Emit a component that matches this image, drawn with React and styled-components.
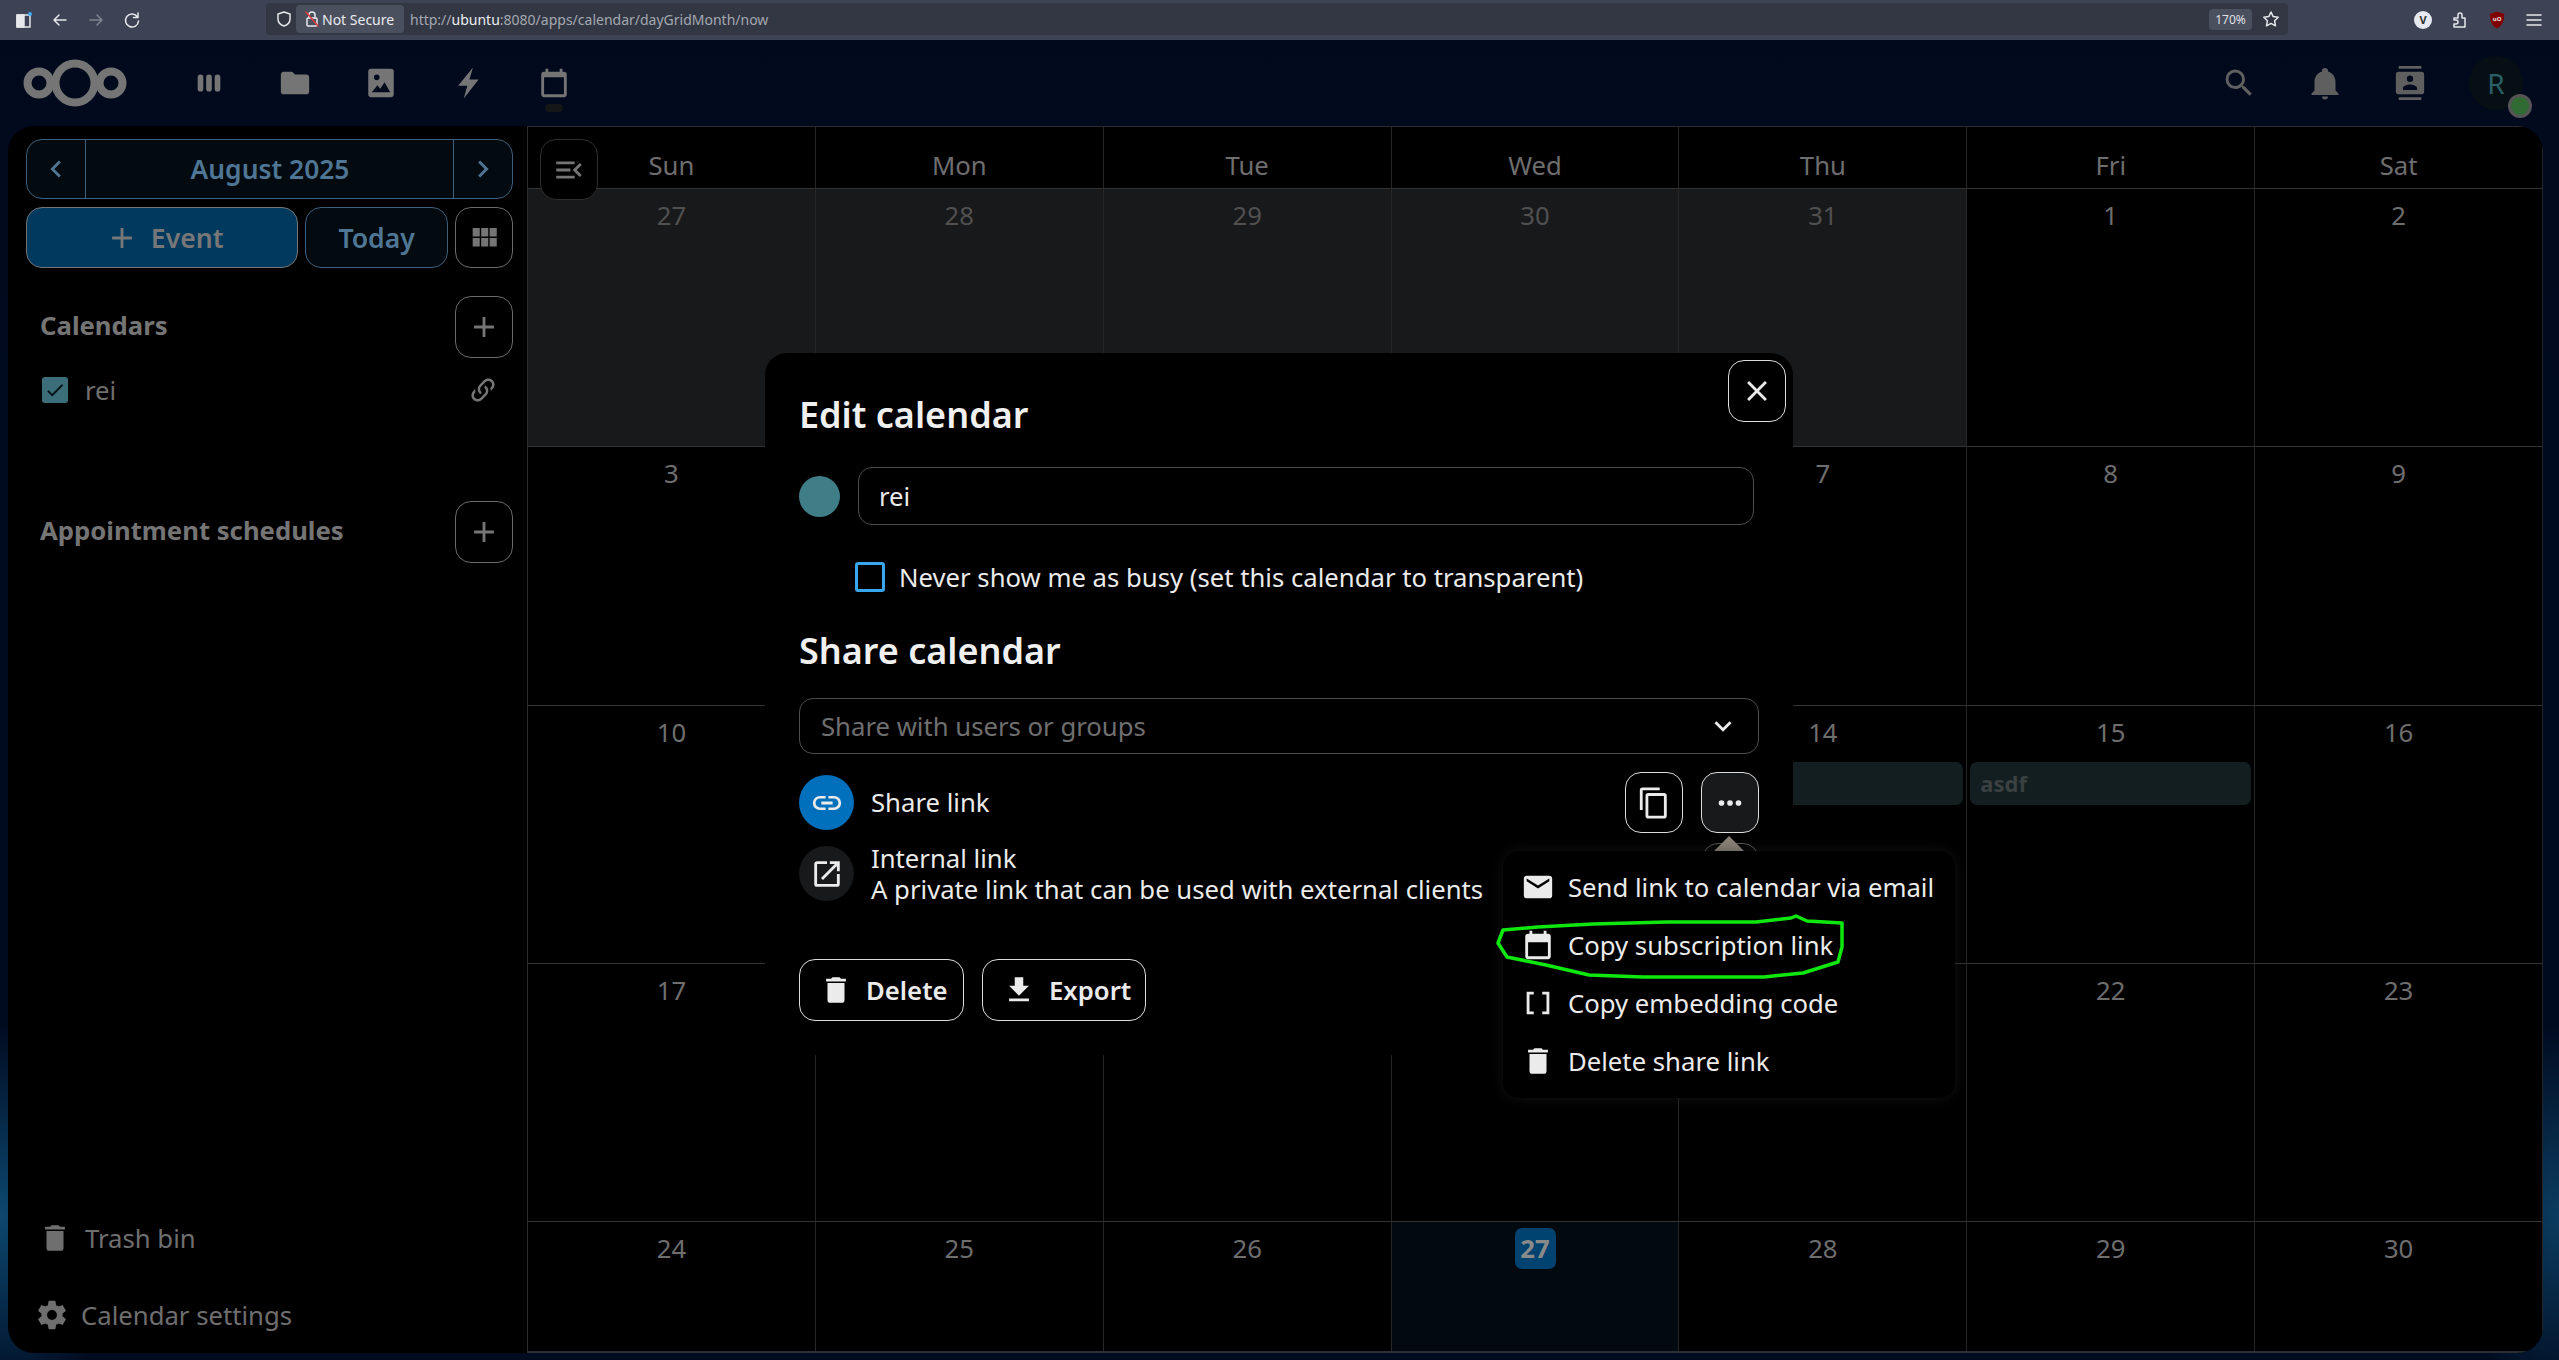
import React from "react";
import styled, { createGlobalStyle } from "styled-components";

const P = {
  del: "M19,4H15.5L14.5,3H9.5L8.5,4H5V6H19M6,19A2,2 0 0,0 8,21H16A2,2 0 0,0 18,19V7H6V19Z",
  download: "M5,20H19V18H5M19,9H15V3H9V9H5L12,16L19,9Z",
  close: "M19,6.41L17.59,5L12,10.59L6.41,5L5,6.41L10.59,12L5,17.59L6.41,19L12,13.41L17.59,19L19,17.59L13.41,12L19,6.41Z",
  plus: "M19,13H13V19H11V13H5V11H11V5H13V11H19V13Z",
  email: "M20,8L12,13L4,8V6L12,11L20,6M20,4H4C2.89,4 2,4.89 2,6V18A2,2 0 0,0 4,20H20A2,2 0 0,0 22,18V6C22,4.89 21.1,4 20,4Z",
  calBlank: "M19 4H18V2H16V4H8V2H6V4H5A2 2 0 0 0 3 6V20A2 2 0 0 0 5 22H19A2 2 0 0 0 21 20V6A2 2 0 0 0 19 4M19 20H5V10H19V20Z",
  brackets: "M15,4V6H18V18H15V20H20V4M4,4V20H9V18H6V6H9V4H4Z",
  cog: "M12,15.5A3.5,3.5 0 0,1 8.5,12A3.5,3.5 0 0,1 12,8.5A3.5,3.5 0 0,1 15.5,12A3.5,3.5 0 0,1 12,15.5M19.43,12.97C19.47,12.65 19.5,12.33 19.5,12C19.5,11.67 19.47,11.34 19.43,11L21.54,9.37C21.73,9.22 21.78,8.95 21.66,8.73L19.66,5.27C19.54,5.05 19.27,4.96 19.05,5.05L16.56,6.05C16.04,5.66 15.5,5.32 14.87,5.07L14.5,2.42C14.46,2.18 14.25,2 14,2H10C9.75,2 9.54,2.18 9.5,2.42L9.13,5.07C8.5,5.32 7.96,5.66 7.44,6.05L4.95,5.05C4.73,4.96 4.46,5.05 4.34,5.27L2.34,8.73C2.21,8.95 2.27,9.22 2.46,9.37L4.57,11C4.53,11.34 4.5,11.67 4.5,12C4.5,12.33 4.53,12.65 4.57,12.97L2.46,14.63C2.27,14.78 2.21,15.05 2.34,15.27L4.34,18.73C4.46,18.95 4.73,19.03 4.95,18.95L7.44,17.94C7.96,18.34 8.5,18.68 9.13,18.93L9.5,21.58C9.54,21.82 9.75,22 10,22H14C14.25,22 14.46,21.82 14.5,21.58L14.87,18.93C15.5,18.67 16.04,18.34 16.56,17.94L19.05,18.95C19.27,19.03 19.54,18.95 19.66,18.73L21.66,15.27C21.78,15.05 21.73,14.78 21.54,14.63L19.43,12.97Z",
  search: "M9.5,3A6.5,6.5 0 0,1 16,9.5C16,11.11 15.41,12.59 14.44,13.73L14.71,14H15.5L20.5,19L19,20.5L14,15.5V14.71L13.73,14.44C12.59,15.41 11.11,16 9.5,16A6.5,6.5 0 0,1 3,9.5A6.5,6.5 0 0,1 9.5,3M9.5,5C7,5 5,7 5,9.5C5,12 7,14 9.5,14C12,14 14,12 14,9.5C14,7 12,5 9.5,5Z",
  bell: "M21,19V20H3V19L5,17V11C5,7.9 7.03,5.17 10,4.29C10,4.19 10,4.1 10,4A2,2 0 0,1 12,2A2,2 0 0,1 14,4C14,4.1 14,4.19 14,4.29C16.97,5.17 19,7.9 19,11V17L21,19M14,21A2,2 0 0,1 12,23A2,2 0 0,1 10,21",
  contacts: "M20,0H4V2H20V0M4,24H20V22H4V24M20,4H4A2,2 0 0,0 2,6V18A2,2 0 0,0 4,20H20A2,2 0 0,0 22,18V6A2,2 0 0,0 20,4M12,6.75A2.25,2.25 0 0,1 14.25,9A2.25,2.25 0 0,1 12,11.25A2.25,2.25 0 0,1 9.75,9A2.25,2.25 0 0,1 12,6.75M17,17H7V15.5C7,13.83 10.33,13 12,13C13.67,13 17,13.83 17,15.5V17Z",
  folder: "M10,4H4C2.89,4 2,4.89 2,6V18A2,2 0 0,0 4,20H20A2,2 0 0,0 22,18V8C22,6.89 21.1,6 20,6H12L10,4Z",
  grid: "M16,5V11H21V5M10,11H15V5H10M16,18H21V12H16M10,18H15V12H10M4,11H9V5H4M4,18H9V12H4V18Z",
  copy: "M19,21H8V7H19M19,5H8A2,2 0 0,0 6,7V21A2,2 0 0,0 8,23H19A2,2 0 0,0 21,21V7A2,2 0 0,0 19,5M16,1H4A2,2 0 0,0 2,3V17H4V3H16V1Z",
  dots: "M16,12A2,2 0 0,1 18,10A2,2 0 0,1 20,12A2,2 0 0,1 18,14A2,2 0 0,1 16,12M10,12A2,2 0 0,1 12,10A2,2 0 0,1 14,12A2,2 0 0,1 12,14A2,2 0 0,1 10,12M4,12A2,2 0 0,1 6,10A2,2 0 0,1 8,12A2,2 0 0,1 6,14A2,2 0 0,1 4,12Z",
  openNew: "M14,3V5H17.59L7.76,14.83L9.17,16.24L19,6.41V10H21V3M19,19H5V5H12V3H5C3.89,3 3,3.9 3,5V19A2,2 0 0,0 5,21H19A2,2 0 0,0 21,19V12H19V19Z",
  linkVar: "M10.59,13.41C11,13.8 11,14.44 10.59,14.83C10.2,15.22 9.56,15.22 9.17,14.83C7.22,12.88 7.22,9.71 9.17,7.76V7.76L12.71,4.22C14.66,2.27 17.83,2.27 19.78,4.22C21.73,6.17 21.73,9.34 19.78,11.29L18.29,12.78C18.3,11.96 18.17,11.14 17.89,10.36L18.36,9.88C19.54,8.71 19.54,6.81 18.36,5.64C17.19,4.46 15.29,4.46 14.12,5.64L10.59,9.17C9.41,10.34 9.41,12.24 10.59,13.41M13.41,9.17C13.8,8.78 14.44,8.78 14.83,9.17C16.78,11.12 16.78,14.29 14.83,16.24V16.24L11.29,19.78C9.34,21.73 6.17,21.73 4.22,19.78C2.27,17.83 2.27,14.66 4.22,12.71L5.71,11.22C5.7,12.04 5.83,12.86 6.11,13.65L5.64,14.12C4.46,15.29 4.46,17.19 5.64,18.36C6.81,19.54 8.71,19.54 9.88,18.36L13.41,14.83C14.59,13.66 14.59,11.76 13.41,10.59C13,10.2 13,9.56 13.41,9.17Z",
  link: "M3.9,12C3.9,10.29 5.29,8.9 7,8.9H11V7H7A5,5 0 0,0 2,12A5,5 0 0,0 7,17H11V15.1H7C5.29,15.1 3.9,13.71 3.9,12M8,13H16V11H8V13M17,7H13V8.9H17C18.71,8.9 20.1,10.29 20.1,12C20.1,13.71 18.71,15.1 17,15.1H13V17H17A5,5 0 0,0 22,12A5,5 0 0,0 17,7Z",
  left: "M15.41,16.58L10.83,12L15.41,7.41L14,6L8,12L14,18L15.41,16.58Z",
  right: "M8.59,16.58L13.17,12L8.59,7.41L10,6L16,12L10,18L8.59,16.58Z",
  down: "M7.41,8.58L12,13.17L16.59,8.58L18,10L12,16L6,10L7.41,8.58Z",
  check: "M21,7L9,19L3.5,13.5L4.91,12.09L9,16.17L19.59,5.59L21,7Z",
  menuOpen: "M21,15.61L19.59,17L14.58,12L19.59,7L21,8.39L17.44,12L21,15.61M3,6H16V8H3V6M3,13V11H13V13H3M3,18V16H16V18H3Z",
  bolt: "M15.5,1L5,14H11.5L9,23L19.5,9.5H13Z",
  photo: "M5,2H19A2,2 0 0,1 21,4V20A2,2 0 0,1 19,22H5A2,2 0 0,1 3,20V4A2,2 0 0,1 5,2M9,6A2,2 0 0,0 7,8A2,2 0 0,0 9,10A2,2 0 0,0 11,8A2,2 0 0,0 9,6M5.5,18.5H18.5L14.5,11.5L11.5,16L9.5,13.5Z",
  calendarNav: "M19 4H18V2H16V4H8V2H6V4H5A2 2 0 0 0 3 6V20A2 2 0 0 0 5 22H19A2 2 0 0 0 21 20V6A2 2 0 0 0 19 4M19 20H5V8H19V20Z",
  apps: "M6,6A2,2 0 0,1 8,8V16A2,2 0 0,1 4,16V8A2,2 0 0,1 6,6M12,6A2,2 0 0,1 14,8V16A2,2 0 0,1 10,16V8A2,2 0 0,1 12,6M18,6A2,2 0 0,1 20,8V16A2,2 0 0,1 16,16V8A2,2 0 0,1 18,6Z",
};

const Global = createGlobalStyle`
  html, body { margin: 0; padding: 0; background: #000; overflow: hidden; }
  * { box-sizing: border-box; }
  body { font-family: "Noto Sans", "Liberation Sans", sans-serif; }
`;

const Svg = styled.svg`
  display: block;
  flex: none;
  width: ${(p) => p.$size || 34}px;
  height: ${(p) => p.$size || 34}px;
  fill: ${(p) => p.$color || "currentColor"};
`;
const Icon = ({ d, size, color }) => (
  <Svg viewBox="0 0 24 24" $size={size} $color={color}>
    <path d={d} />
  </Svg>
);

const Page = styled.div`
  position: relative;
  width: 2559px;
  height: 1360px;
  overflow: hidden;
  display: flex;
  flex-direction: column;
  background:
    radial-gradient(130px 190px at 0 1215px, #0c4870 0%, rgba(12, 72, 112, 0) 100%),
    radial-gradient(110px 190px at 100% 1215px, #0b3d60 0%, rgba(11, 61, 96, 0) 100%),
    linear-gradient(180deg, #010a1d 0%, #010b20 70%, #010b20 100%);
`;

/* browser chrome */
const Chrome = styled.div`
  height: 40px;
  flex: none;
  background: #3d4354;
  display: flex;
  align-items: center;
  position: relative;
  padding: 0 0 0 15px;
`;
const ChromeButtons = styled.div`
  display: flex;
  align-items: center;
  gap: 18px;
  width: 251px;
`;
const ChromeGlyph = styled.svg`
  display: block;
  flex: none;
  width: 18px;
  height: 18px;
  fill: none;
  stroke: ${(p) => p.$color || "#e6e8ec"};
  stroke-width: 1.5;
  stroke-linecap: round;
  stroke-linejoin: round;
`;
const UrlBar = styled.div`
  width: 2022px;
  height: 32px;
  background: #323743;
  border-radius: 4px;
  display: flex;
  align-items: center;
  padding: 0 8px 0 9px;
  margin-top: -2px;
`;
const NotSecure = styled.div`
  height: 28px;
  width: 108px;
  margin-left: 3px;
  border-radius: 4px;
  background: #4b505e;
  display: flex;
  align-items: center;
  gap: 1px;
  padding-left: 7px;
  color: #e8eaee;
  font-size: 14px;
  white-space: nowrap;
`;
const UrlText = styled.div`
  margin-left: 6px;
  font-size: 14px;
  color: #a3a7b0;
  flex: 1;
  white-space: nowrap;
  & b { font-weight: 400; color: #eceef1; }
`;
const ZoomChip = styled.div`
  width: 43px;
  height: 21px;
  border-radius: 4px;
  background: #4b505e;
  color: #dfe1e6;
  font-size: 12px;
  display: flex;
  align-items: center;
  justify-content: center;
  margin-right: 10px;
`;
const Extensions = styled.div`
  display: flex;
  align-items: center;
  gap: 19px;
  margin-left: 126px;
`;
const VBadge = styled.div`
  width: 18px;
  height: 18px;
  border-radius: 50%;
  background: #e6e9f2;
  color: #333;
  font-size: 11px;
  font-weight: 700;
  text-align: center;
  line-height: 18px;
`;
const ShieldLabel = styled.text`
  fill: #f3e6e6;
  stroke: none;
  font-size: 6px;
  font-weight: 700;
`;

/* nextcloud header */
const TopBar = styled.header`
  height: 86px;
  flex: none;
  display: flex;
  align-items: center;
  padding-left: 22px;
  position: relative;
`;
const Nav = styled.nav`
  display: flex;
  align-items: center;
  margin-left: 38px;
  color: #757575;
`;
const NavItem = styled.div`
  width: 86.2px;
  height: 50px;
  display: flex;
  align-items: center;
  justify-content: center;
  position: relative;
  ${(p) => p.$active && `
    &::after {
      content: "";
      position: absolute;
      left: 34px;
      bottom: -4px;
      width: 18px;
      height: 8px;
      border-radius: 4px;
      background: #141618;
    }
  `}
`;
const Spacer = styled.div`
  flex: 1;
`;
const HeaderTools = styled.div`
  display: flex;
  align-items: center;
  color: #5f5f5f;
  gap: 50px;
  padding-right: 36px;
`;
const Avatar = styled.div`
  position: relative;
  width: 54px;
  height: 54px;
  margin-left: -8px;
  border-radius: 50%;
  background: #061014;
  color: #2b5f66;
  font-size: 28px;
  line-height: 54px;
  text-align: center;
`;
const Status = styled.div`
  position: absolute;
  right: -9px;
  bottom: -8px;
  width: 24px;
  height: 24px;
  border-radius: 50%;
  background: #2f6b32;
  border: 3px solid #555;
`;

/* main */
const Body = styled.div`
  flex: 1;
  display: flex;
  margin: 0 16px 7px 8px;
  border-radius: 26px;
  overflow: hidden;
  background: #000;
  min-height: 0;
`;
const Sidebar = styled.aside`
  width: 519px;
  flex: none;
  display: flex;
  flex-direction: column;
  padding: 13px 14px 0 18px;
  color: #757575;
`;
const MonthNav = styled.div`
  height: 60px;
  display: flex;
  border: 1px solid #3d5f7a;
  border-radius: 16px;
  background: #030a10;
  color: #4f7694;
`;
const NavArrow = styled.div`
  width: 58px;
  flex: none;
  display: flex;
  align-items: center;
  justify-content: center;
`;
const MonthLabel = styled.div`
  flex: 1;
  border-left: 1px solid #3d5f7a;
  border-right: 1px solid #3d5f7a;
  font-size: 26.4px;
  font-weight: 600;
  display: flex;
  align-items: center;
  justify-content: center;
  padding-left: 1px;
`;
const ActionRow = styled.div`
  display: flex;
  gap: 7px;
  margin-top: 8px;
`;
const EventButton = styled.div`
  width: 273px;
  height: 61px;
  border-radius: 16px;
  background: #00395e;
  border: 1px solid #757575;
  color: #777;
  font-size: 26.6px;
  font-weight: 600;
  display: flex;
  align-items: center;
  justify-content: center;
  gap: 12px;
  padding-left: 4px;
`;
const TodayButton = styled.div`
  width: 143px;
  height: 61px;
  border-radius: 16px;
  background: #030a10;
  border: 1px solid #3d5f7a;
  color: #4f7694;
  font-size: 26.6px;
  font-weight: 600;
  display: flex;
  align-items: center;
  justify-content: center;
`;
const SquareButton = styled.div`
  width: ${(p) => p.$w || 58}px;
  height: ${(p) => p.$h || 61}px;
  flex: none;
  border-radius: 16px;
  border: 1px solid ${(p) => p.$border || "#6a6a6a"};
  background: ${(p) => p.$bg || "transparent"};
  color: ${(p) => p.$fg || "#757575"};
  display: flex;
  align-items: center;
  justify-content: center;
`;
const SectionHead = styled.div`
  display: flex;
  align-items: center;
  justify-content: space-between;
  margin-top: ${(p) => p.$top}px;
  padding-left: 14px;
  font-size: 25.7px;
  font-weight: 700;
`;
const SectionLabel = styled.span`
  margin-top: -3px;
`;
const CalendarRow = styled.div`
  display: flex;
  align-items: center;
  height: 34px;
  margin-top: 15px;
  padding-left: 16px;
  font-size: 25.7px;
  color: #6f6f6f;
`;
const SideCheck = styled.div`
  width: 26px;
  height: 26px;
  border-radius: 3px;
  background: #3b6e78;
  display: flex;
  align-items: center;
  justify-content: center;
  margin-right: 17px;
`;
const SideLink = styled.div`
  margin-left: auto;
  margin-right: 15px;
  color: #757575;
`;
const SideFooter = styled.div`
  margin-top: auto;
  padding-bottom: 21px;
  display: flex;
  flex-direction: column;
  gap: 43px;
  font-size: 25.7px;
  color: #6f6f6f;
`;
const FootItem = styled.div`
  display: flex;
  align-items: center;
  height: 34px;
  padding-left: ${(p) => p.$pad}px;
  gap: ${(p) => p.$gap}px;
`;

const Calendar = styled.main`
  flex: 1;
  position: relative;
  overflow: hidden;
  border-top: 1px solid #2c2c2c;
  border-left: 1px solid #2c2c2c;
  border-bottom: 2px solid #2c3035;
`;
const Grid = styled.div`
  display: grid;
  grid-template-columns: repeat(7, 287.86px);
  grid-template-rows: 62px;
  grid-auto-rows: 258.25px;
`;
const HeadCell = styled.div`
  border-right: 1px solid #262626;
  border-bottom: 1.5px solid #333;
  color: #6e6e6e;
  font-size: 25.7px;
  line-height: 34px;
  display: flex;
  align-items: flex-end;
  justify-content: center;
  padding-bottom: 5px;
`;
const Cell = styled.div`
  border-right: 1px solid #262626;
  border-bottom: 1.5px solid #333;
  background: ${(p) => (p.$muted ? "#18191b" : p.$today ? "#020a10" : "#000")};
  display: flex;
  flex-direction: column;
  align-items: center;
`;
const DayNumber = styled.div`
  margin-top: 6px;
  min-width: 41px;
  height: 41px;
  line-height: 41px;
  text-align: center;
  font-size: 25.7px;
  border-radius: 7px;
  color: ${(p) => (p.$muted ? "#505050" : p.$today ? "#8a8a8a" : "#6e6e6e")};
  background: ${(p) => (p.$today ? "#004270" : "transparent")};
  font-weight: ${(p) => (p.$today ? 700 : 400)};
`;
const Chip = styled.div`
  align-self: stretch;
  height: 43px;
  margin: 9px 3px 0 3px;
  border-radius: 7px;
  background: #121e20;
  color: #3b4040;
  font-size: 22px;
  font-weight: 700;
  line-height: 43px;
  padding-left: 10px;
`;
const ToggleButton = styled(SquareButton)`
  position: absolute;
  left: 12px;
  top: 12px;
  background: #000;
  border-color: #2e2e2e;
`;

/* modal */
const Modal = styled.section`
  position: absolute;
  left: 765px;
  top: 353px;
  width: 1028px;
  height: 702px;
  background: #000;
  border-radius: 22px;
  padding: 42px 34px 0 34px;
  color: #ebebeb;
  font-size: 25.7px;
`;
const CloseButton = styled(SquareButton)`
  position: absolute;
  right: 7px;
  top: 7px;
  border-color: #dcdcdc;
  color: #ebebeb;
  height: 62px;
`;
const Title = styled.h2`
  margin: ${(p) => p.$top || 0}px 0 0;
  font-size: 36px;
  line-height: 40px;
  font-weight: 600;
  color: #f0f0f0;
`;
const NameRow = styled.div`
  display: flex;
  align-items: center;
  gap: 18px;
  margin-top: 32px;
`;
const ColorDot = styled.div`
  width: 41px;
  height: 41px;
  border-radius: 50%;
  background: #3f7d87;
`;
const NameInput = styled.div`
  width: 896px;
  height: 58px;
  border: 1.5px solid #4d4d4d;
  border-radius: 14px;
  padding-left: 20px;
  line-height: 57px;
`;
const CheckRow = styled.div`
  display: flex;
  align-items: center;
  height: 44px;
  gap: 14px;
  margin: 30px 0 0 56px;
`;
const CheckBox = styled.div`
  width: 30px;
  height: 30px;
  border: 3px solid #38a6ee;
  border-radius: 3px;
`;
const SelectBox = styled.div`
  height: 56px;
  margin-top: 27px;
  border: 1.5px solid #4d4d4d;
  border-radius: 14px;
  padding: 0 18px 0 21px;
  color: #6f6f6f;
  display: flex;
  align-items: center;
  justify-content: space-between;
`;
const SelectArrow = styled.div`
  color: #ebebeb;
`;
const LinkRow = styled.div`
  display: flex;
  align-items: center;
  height: 61px;
  margin-top: ${(p) => p.$top}px;
  position: relative;
`;
const LinkCircle = styled.div`
  width: 55px;
  height: 55px;
  flex: none;
  border-radius: 50%;
  background: ${(p) => p.$bg};
  display: flex;
  align-items: center;
  justify-content: center;
  margin-right: 17px;
  color: #ebebeb;
`;
const LinkText = styled.div`
  flex: 1;
  line-height: 31px;
  white-space: nowrap;
`;
const LinkActions = styled.div`
  display: flex;
  gap: 18px;
`;
const PeekButton = styled.div`
  position: absolute;
  right: 0;
  top: 0;
  width: 57px;
  height: 40px;
  border: 1px solid #555;
  border-radius: 16px;
`;
const ModalFoot = styled.div`
  display: flex;
  gap: 18px;
  margin-top: 55px;
`;
const FootButton = styled.div`
  height: 62px;
  width: ${(p) => p.$w}px;
  border: 1px solid #dcdcdc;
  border-radius: 16px;
  display: flex;
  align-items: center;
  font-weight: 600;
  gap: 13px;
  padding-left: 19px;
  color: #ebebeb;
`;
const Arrow = styled.div`
  position: absolute;
  left: 1713px;
  top: 836px;
  width: 0;
  height: 0;
  border-left: 16px solid transparent;
  border-right: 16px solid transparent;
  border-bottom: 16px solid #8a8378;
`;
const Menu = styled.ul`
  position: absolute;
  left: 1503px;
  top: 851px;
  width: 452px;
  height: 247px;
  margin: 0;
  padding: 7px 0 0;
  list-style: none;
  background: #000;
  border-radius: 16px;
  box-shadow: 0 0 14px rgba(40, 40, 40, 0.5);
  color: #ebebeb;
  font-size: 25.7px;
`;
const MenuItem = styled.li`
  height: 58px;
  display: flex;
  align-items: center;
  gap: 13px;
  padding-left: 18px;
  white-space: nowrap;
`;
const Scribble = styled.svg`
  position: absolute;
  left: 0;
  top: 0;
  width: 2559px;
  height: 1360px;
  fill: none;
  stroke: #0fe80f;
  stroke-width: 3.5;
  stroke-linejoin: round;
  pointer-events: none;
`;

const weeks = [
  [[27, 1], [28, 1], [29, 1], [30, 1], [31, 1], [1], [2]],
  [[3], [""], [""], [""], [7], [8], [9]],
  [[10], [""], [""], [""], [14, 0, 0, 1], [15, 0, 0, 2], [16]],
  [[17], [""], [""], [""], [""], [22], [23]],
  [[24], [25], [26], [27, 0, 1], [28], [29], [30]],
];
const dayNames = ["Sun", "Mon", "Tue", "Wed", "Thu", "Fri", "Sat"];

const Logo = () => (
  <svg width="106" height="50" viewBox="0 0 106 50" fill="none" stroke="#757575">
    <circle cx="17" cy="25" r="11.5" strokeWidth="8" />
    <circle cx="53" cy="25" r="19.5" strokeWidth="8" />
    <circle cx="89" cy="25" r="11.5" strokeWidth="8" />
  </svg>
);

export default function App() {
  return (
    <Page>
      <Global />
      <Chrome>
        <ChromeButtons>
          <ChromeGlyph viewBox="0 0 18 18"><rect x="2" y="4" width="13" height="12" /><path d="M2 4h7v12H2z" fill="#e6e8ec" /><circle cx="15" cy="3" r="2" fill="#3fa9f5" stroke="none" /></ChromeGlyph>
          <ChromeGlyph viewBox="0 0 18 18"><path d="M15 9H3M8 4L3 9l5 5" /></ChromeGlyph>
          <ChromeGlyph viewBox="0 0 18 18" $color="#80858f"><path d="M3 9h12M10 4l5 5-5 5" /></ChromeGlyph>
          <ChromeGlyph viewBox="0 0 18 18"><path d="M14.5 6A6.5 6.5 0 1 0 15.5 10M15 2v4.5h-4.5" /></ChromeGlyph>
        </ChromeButtons>
        <UrlBar>
          <ChromeGlyph viewBox="0 0 18 18"><path d="M9 2l6 2v5c0 4-3 6-6 7-3-1-6-3-6-7V4z" /></ChromeGlyph>
          <NotSecure>
            <ChromeGlyph viewBox="0 0 18 18"><rect x="4" y="8" width="10" height="8" rx="1" /><path d="M6 8V5a3 3 0 0 1 6 0v3" /><path d="M3 2l12 14" stroke="#e03a3a" /></ChromeGlyph>
            Not Secure
          </NotSecure>
          <UrlText>http://<b>ubuntu</b>:8080/apps/calendar/dayGridMonth/now</UrlText>
          <ZoomChip>170%</ZoomChip>
          <ChromeGlyph viewBox="0 0 18 18"><path d="M9 2l2.2 4.6 5 .7-3.6 3.5.9 5L9 13.4 4.5 15.800l.9-5L1.800 7.300l5-.7z" /></ChromeGlyph>
        </UrlBar>
        <Extensions>
          <VBadge>V</VBadge>
          <ChromeGlyph viewBox="0 0 18 18"><path d="M3 7h4V4a2 2 0 0 1 4 0v3h3v9H3v-3h2a2 2 0 0 0 0-4H3z" /></ChromeGlyph>
          <ChromeGlyph viewBox="0 0 18 18" $color="#800000"><path d="M9 1.500l6.500 2c0 7-1.500 10.500-6.500 13-5-2.500-6.500-6-6.500-13z" fill="#800000" /><ShieldLabel x="4.800" y="10">uO</ShieldLabel></ChromeGlyph>
          <ChromeGlyph viewBox="0 0 18 18"><path d="M2 4h14M2 9h14M2 14h14" /></ChromeGlyph>
        </Extensions>
      </Chrome>
      <TopBar>
        <Logo />
        <Nav>
          <NavItem><Icon d={P.apps} /></NavItem>
          <NavItem><Icon d={P.folder} /></NavItem>
          <NavItem><Icon d={P.photo} /></NavItem>
          <NavItem><Icon d={P.bolt} /></NavItem>
          <NavItem $active><Icon d={P.calendarNav} /></NavItem>
        </Nav>
        <Spacer />
        <HeaderTools>
          <Icon d={P.search} size={36} />
          <Icon d={P.bell} size={36} />
          <Icon d={P.contacts} />
          <Avatar>R<Status /></Avatar>
        </HeaderTools>
      </TopBar>
      <Body>
        <Sidebar>
          <MonthNav>
            <NavArrow><Icon d={P.left} /></NavArrow>
            <MonthLabel>August 2025</MonthLabel>
            <NavArrow><Icon d={P.right} /></NavArrow>
          </MonthNav>
          <ActionRow>
            <EventButton><Icon d={P.plus} />Event</EventButton>
            <TodayButton>Today</TodayButton>
            <SquareButton><Icon d={P.grid} /></SquareButton>
          </ActionRow>
          <SectionHead $top={28}><SectionLabel>Calendars</SectionLabel><SquareButton $h={62}><Icon d={P.plus} /></SquareButton></SectionHead>
          <CalendarRow>
            <SideCheck><Icon d={P.check} size={22} color="#06141a" /></SideCheck>
            rei
            <SideLink><Icon d={P.linkVar} size={30} /></SideLink>
          </CalendarRow>
          <SectionHead $top={94}><SectionLabel>Appointment schedules</SectionLabel><SquareButton $h={62}><Icon d={P.plus} /></SquareButton></SectionHead>
          <SideFooter>
            <FootItem $pad={12} $gap={13}><Icon d={P.del} />Trash bin</FootItem>
            <FootItem $pad={9} $gap={12}><Icon d={P.cog} />Calendar settings</FootItem>
          </SideFooter>
        </Sidebar>
        <Calendar>
          <Grid>
            {dayNames.map((d) => <HeadCell key={d}>{d}</HeadCell>)}
            {weeks.flat().map(([n, muted, today, chip], i) => (
              <Cell key={i} $muted={!!muted} $today={!!today}>
                <DayNumber $muted={!!muted} $today={!!today}>{n}</DayNumber>
                {chip === 1 && <Chip />}
                {chip === 2 && <Chip>asdf</Chip>}
              </Cell>
            ))}
          </Grid>
          <ToggleButton><Icon d={P.menuOpen} /></ToggleButton>
        </Calendar>
      </Body>
      <Modal>
        <CloseButton><Icon d={P.close} /></CloseButton>
        <Title>Edit calendar</Title>
        <NameRow>
          <ColorDot />
          <NameInput>rei</NameInput>
        </NameRow>
        <CheckRow>
          <CheckBox />
          Never show me as busy (set this calendar to transparent)
        </CheckRow>
        <Title $top={32}>Share calendar</Title>
        <SelectBox>
          Share with users or groups
          <SelectArrow><Icon d={P.down} /></SelectArrow>
        </SelectBox>
        <LinkRow $top={18}>
          <LinkCircle $bg="#0070bd"><Icon d={P.link} /></LinkCircle>
          <LinkText>Share link</LinkText>
          <LinkActions>
            <SquareButton $h={61} $border="#dcdcdc" $fg="#ebebeb"><Icon d={P.copy} /></SquareButton>
            <SquareButton $h={61} $border="#dcdcdc" $fg="#ebebeb" $bg="#18191b"><Icon d={P.dots} /></SquareButton>
          </LinkActions>
        </LinkRow>
        <LinkRow $top={10}>
          <LinkCircle $bg="#18191b"><Icon d={P.openNew} /></LinkCircle>
          <LinkText>Internal link<br />A private link that can be used with external clients</LinkText>
          <PeekButton />
        </LinkRow>
        <ModalFoot>
          <FootButton $w={165}><Icon d={P.del} />Delete</FootButton>
          <FootButton $w={164}><Icon d={P.download} />Export</FootButton>
        </ModalFoot>
      </Modal>
      <Arrow />
      <Menu>
        <MenuItem><Icon d={P.email} />Send link to calendar via email</MenuItem>
        <MenuItem><Icon d={P.calBlank} />Copy subscription link</MenuItem>
        <MenuItem><Icon d={P.brackets} />Copy embedding code</MenuItem>
        <MenuItem><Icon d={P.del} />Delete share link</MenuItem>
      </Menu>
      <Scribble viewBox="0 0 2559 1360">
        <path d="M1498 943 L1503 930 L1538 927 L1593 924 L1667 922 L1756 922 L1791 918 L1796 916 L1807 921 L1842 923 L1842 947 L1838 962 L1803 973 L1764 977 L1643 977 L1589 975 L1546 965 L1507 957 Z" />
      </Scribble>
    </Page>
  );
}
